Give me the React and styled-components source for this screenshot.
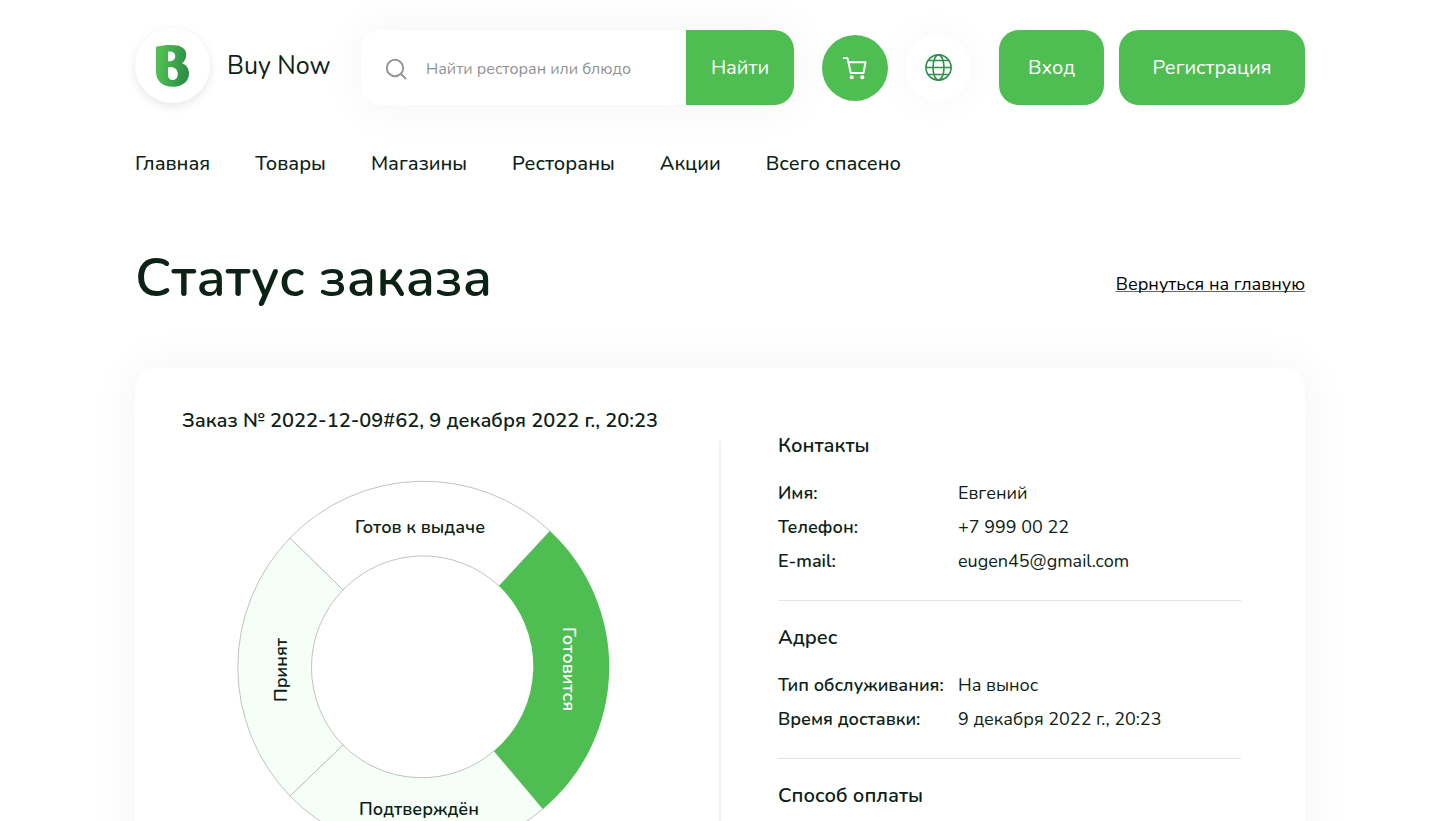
import React from "react";
import styled, { createGlobalStyle } from "styled-components";

const GlobalStyle = createGlobalStyle`
  *, *::before, *::after { box-sizing: border-box; }
  body {
    margin: 0;
    background: #fff;
    color: #0d2216;
    font-family: "Nunito", "Lato", "Open Sans", sans-serif;
  }
  h1, h2, h3, dl, dd { margin: 0; }
`;

const green = "#4fbe52";

const Page = styled.div`
  max-width: 1202px;
  margin: 0 auto;
  padding: 30px 16px 48px;
`;

const Header = styled.header`
  display: flex;
  align-items: center;
`;

const Brand = styled.a`
  flex: none;
  width: 226px;
  height: 75px;
  padding-bottom: 4px;
  display: flex;
  align-items: center;
  gap: 17px;
  color: inherit;
  text-decoration: none;
  font-size: 25px;
  line-height: 34px;
`;

const LogoCircle = styled.span`
  flex: none;
  width: 75px;
  height: 75px;
  border-radius: 50%;
  display: flex;
  align-items: center;
  justify-content: center;
  background: #fff;
  box-shadow: 0 3px 10px rgba(0, 0, 0, 0.1);
`;

const SearchForm = styled.form`
  flex: 1;
  min-width: 0;
  height: 75px;
  display: flex;
  align-items: center;
  border-radius: 20px;
  background: #fff;
  overflow: hidden;
  box-shadow: 0 0 50px rgba(0, 0, 0, 0.05);
`;

const SearchLabel = styled.label`
  flex: 1;
  min-width: 0;
  display: flex;
  align-items: center;
  gap: 19px;
  padding: 2px 12px 0 24px;
`;

const SearchInput = styled.input`
  flex: 1;
  min-width: 0;
  padding: 0;
  border: 0;
  outline: 0;
  background: transparent;
  color: inherit;
  font: 400 16px/24px "Nunito", "Lato", "Open Sans", sans-serif;

  &::placeholder {
    color: #929292;
    opacity: 1;
  }
`;

const Button = styled.button`
  flex: none;
  width: ${(p) => p.$width}px;
  height: 75px;
  padding: 0;
  border: 0;
  border-radius: ${(p) => (p.$attached ? "0" : "20px")};
  background: ${green};
  color: #fff;
  font: 400 20px/28px "Nunito", "Lato", "Open Sans", sans-serif;
  cursor: pointer;
`;

const RoundButton = styled.button`
  width: 66px;
  height: 66px;
  padding: 0;
  border: 0;
  border-radius: 50%;
  display: flex;
  align-items: center;
  justify-content: center;
  background: ${(p) => (p.$filled ? green : "#fff")};
  box-shadow: ${(p) => (p.$filled ? "none" : "0 0 40px rgba(0, 0, 0, 0.04)")};
  cursor: pointer;
`;

const IconGroup = styled.div`
  flex: none;
  display: flex;
  gap: 17px;
  margin: 0 28px;
`;

const AuthGroup = styled.div`
  flex: none;
  display: flex;
  gap: 15px;
`;

const Nav = styled.nav`
  display: flex;
  flex-wrap: wrap;
  gap: 45px;
  margin-top: 45px;
`;

const NavLink = styled.a`
  color: inherit;
  text-decoration: none;
  font-size: 20px;
  font-weight: 500;
  line-height: 28px;
`;

const TitleRow = styled.div`
  display: flex;
  align-items: center;
  justify-content: space-between;
  margin-top: 62px;
`;

const Title = styled.h1`
  font-size: 54px;
  font-weight: 600;
  line-height: 76px;
`;

const BackLink = styled.a`
  padding-top: 12px;
  color: #000;
  font-size: 18px;
  line-height: 24px;
  text-decoration: underline;
  text-decoration-color: rgba(0, 0, 0, 0.6);
  text-decoration-thickness: 1px;
  text-decoration-skip-ink: none;
`;

const Card = styled.main`
  display: grid;
  grid-template-columns: minmax(0, 1fr) 2px minmax(0, 1fr);
  margin-top: 52px;
  padding-bottom: 48px;
  border-radius: 20px;
  background: #fff;
  box-shadow: 0 0 50px rgba(0, 0, 0, 0.05);
`;

const OrderPane = styled.section`
  padding: 39px 0 0 47px;
`;

const OrderTitle = styled.h2`
  font-size: 20px;
  font-weight: 600;
  line-height: 28px;
`;

const StatusChart = styled.svg`
  display: block;
  margin: 46px 0 0 55px;
  overflow: visible;
`;

const ChartLabel = styled.text`
  fill: ${(p) => (p.$active ? "#fff" : "#0d2216")};
  font-size: 18px;
  font-weight: 600;
  text-anchor: middle;
`;

const Divider = styled.div`
  margin-top: 73px;
  background: #f0f0f0;
`;

const DetailsPane = styled.div`
  padding: 64px 64px 0 57px;
`;

const Group = styled.section`
  & + & {
    margin-top: 25px;
    padding-top: 23px;
    border-top: 1px solid #e3e3e3;
  }
`;

const GroupTitle = styled.h3`
  font-size: 20px;
  font-weight: 600;
  line-height: 28px;
`;

const Details = styled.dl`
  display: grid;
  grid-template-columns: 180px 1fr;
  row-gap: 6px;
  margin-top: 19px;
  font-size: 18px;
  line-height: 28px;
  white-space: nowrap;
`;

const Term = styled.dt`
  font-weight: 600;
`;

const Logo = () => (
  <svg width="33" height="42" viewBox="0 0 33 42" aria-hidden="true">
    <defs>
      <linearGradient id="logo" x1="0" y1="0.4" x2="1" y2="0.6">
        <stop offset="0.1" stopColor="#4fbe52" />
        <stop offset="1" stopColor="#2b8a45" />
      </linearGradient>
    </defs>
    <path
      fill="url(#logo)"
      fillRule="evenodd"
      d="M0 1.8C5 .6 10 0 15 0c9.500 0 15.300 3.300 15.300 9.300 0 4-1.600 7.200-4.300 9 4.300 1.600 7 5.200 7 10C33 36.600 26.500 41.700 17 41.700 6.500 41.700 0 36 0 26.500ZM12 6.500v9.800c4.600.2 7.200-1.600 7.200-5.200 0-3.400-2.700-5.200-7.200-4.600ZM12 22v7.500c0 3.600 1.700 5.600 4.800 5.600 3.200 0 5-2.500 5-6.300C21.800 24 18 21.400 12 22Z"
    />
  </svg>
);

const SearchIcon = () => (
  <svg width="22" height="22" viewBox="0 0 22 22" fill="none" stroke="#969696" strokeWidth="2" strokeLinecap="round" aria-hidden="true">
    <circle cx="10" cy="10" r="8.200" />
    <path d="M16 16l4.500 4.500" />
  </svg>
);

const CartIcon = () => (
  <svg width="24" height="24" viewBox="0 0 24 24" fill="none" stroke="#fff" strokeWidth="2" aria-hidden="true">
    <path d="M0 2h4.400l3.400 15h12.700l2-10.700H5.400" strokeLinejoin="round" />
    <circle cx="8.700" cy="21.300" r="2" fill="#fff" stroke="none" />
    <circle cx="19.300" cy="21.300" r="2" fill="#fff" stroke="none" />
  </svg>
);

const GlobeIcon = () => (
  <svg width="28" height="28" viewBox="0 0 28 28" fill="none" stroke="#2f9148" strokeWidth="1.600" aria-hidden="true">
    <circle cx="14.500" cy="13.500" r="12.600" />
    <ellipse cx="14.500" cy="13.500" rx="5.500" ry="12.600" />
    <path d="M1.900 13.500h25.200M4.100 6.500h20.800M4.100 20.500h20.800" />
  </svg>
);

const segments = [
  { label: "Готов к выдаче", fill: "#fff", d: "M53 57A185.500 185.500 0 0 1 313 50L262 105A111 111 0 0 0 106 109Z", at: "translate(183 52)" },
  { label: "Подтверждён", fill: "#f5fff8", d: "M306 328A185.500 185.500 0 0 1 53 315L106 264A111 111 0 0 0 257 270Z", at: "translate(182 334)" },
  { label: "Принят", fill: "#f5fff8", d: "M53 315A185.500 185.500 0 0 1 53 57L106 109A111 111 0 0 0 106 264Z", at: "translate(50 189) rotate(-90)" },
  { label: "Готовится", active: true, fill: green, d: "M313 50A185.500 185.500 0 0 1 306 328L257 270A111 111 0 0 0 262 105Z", at: "translate(326 188) rotate(90)" },
];

const navItems = ["Главная", "Товары", "Магазины", "Рестораны", "Акции", "Всего спасено"];

const groups = [
  {
    title: "Контакты",
    rows: [
      ["Имя:", "Евгений"],
      ["Телефон:", "+7 999 00 22"],
      ["E-mail:", "eugen45@gmail.com"],
    ],
  },
  {
    title: "Адрес",
    rows: [
      ["Тип обслуживания:", "На вынос"],
      ["Время доставки:", "9 декабря 2022 г., 20:23"],
    ],
  },
  { title: "Способ оплаты", rows: [] },
];

export default function App() {
  return (
    <>
      <GlobalStyle />
      <Page>
        <Header>
          <Brand href="#">
            <LogoCircle>
              <Logo />
            </LogoCircle>
            Buy Now
          </Brand>
          <SearchForm onSubmit={(e) => e.preventDefault()}>
            <SearchLabel>
              <SearchIcon />
              <SearchInput type="text" placeholder="Найти ресторан или блюдо" aria-label="Найти ресторан или блюдо" />
            </SearchLabel>
            <Button type="submit" $width={108} $attached>
              Найти
            </Button>
          </SearchForm>
          <IconGroup>
            <RoundButton type="button" $filled aria-label="Корзина">
              <CartIcon />
            </RoundButton>
            <RoundButton type="button" aria-label="Язык">
              <GlobeIcon />
            </RoundButton>
          </IconGroup>
          <AuthGroup>
            <Button type="button" $width={105}>
              Вход
            </Button>
            <Button type="button" $width={186}>
              Регистрация
            </Button>
          </AuthGroup>
        </Header>

        <Nav>
          {navItems.map((item) => (
            <NavLink key={item} href="#">
              {item}
            </NavLink>
          ))}
        </Nav>

        <TitleRow>
          <Title>Статус заказа</Title>
          <BackLink href="#">Вернуться на главную</BackLink>
        </TitleRow>

        <Card>
          <OrderPane>
            <OrderTitle>Заказ № 2022-12-09#62, 9 декабря 2022 г., 20:23</OrderTitle>
            <StatusChart width="372" height="372" viewBox="0 0 372 372">
              {segments.map((s) => (
                <g key={s.label}>
                  <path d={s.d} fill={s.fill} stroke={s.active ? "none" : "#c2c2c2"} />
                  <ChartLabel transform={s.at} $active={s.active}>
                    {s.label}
                  </ChartLabel>
                </g>
              ))}
            </StatusChart>
          </OrderPane>
          <Divider />
          <DetailsPane>
            {groups.map((group) => (
              <Group key={group.title}>
                <GroupTitle>{group.title}</GroupTitle>
                {group.rows.length > 0 && (
                  <Details>
                    {group.rows.map(([term, value]) => (
                      <React.Fragment key={term}>
                        <Term>{term}</Term>
                        <dd>{value}</dd>
                      </React.Fragment>
                    ))}
                  </Details>
                )}
              </Group>
            ))}
          </DetailsPane>
        </Card>
      </Page>
    </>
  );
}
